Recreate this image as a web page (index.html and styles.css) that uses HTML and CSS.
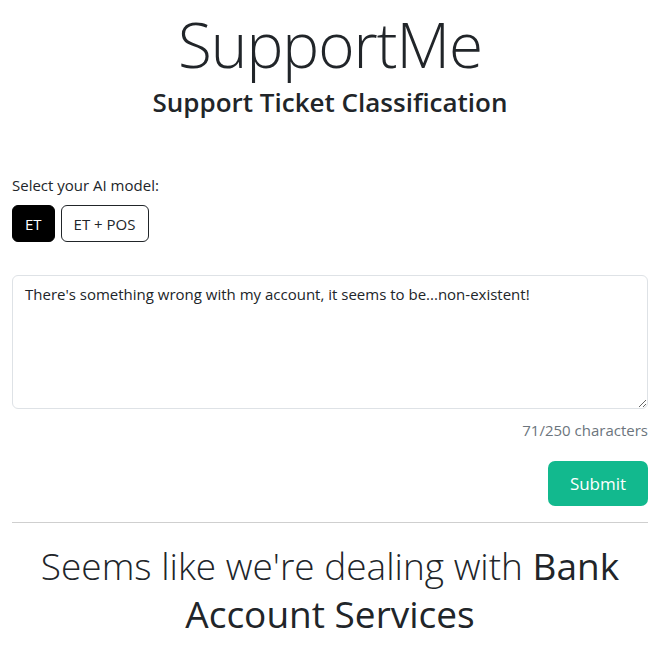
FILE: index.html
```html
<!DOCTYPE html>
<html lang="en">
<head>
<meta charset="utf-8">
<title>SupportMe</title>
<link rel="stylesheet" href="styles.css">
</head>
<body>
<main class="container">
  <header class="header">
    <h1 class="brand">SupportMe</h1>
    <h2 class="subtitle">Support Ticket Classification</h2>
  </header>
  <section class="model">
    <div class="model-label">Select your AI model:</div>
    <div class="model-buttons">
      <button class="btn-model active">ET</button>
      <button class="btn-model">ET + POS</button>
    </div>
  </section>
  <section class="ticket">
    <textarea class="ticket-input">There's something wrong with my account, it seems to be...non-existent!</textarea>
    <div class="counter">71/250 characters</div>
    <div class="actions"><button class="btn-submit">Submit</button></div>
  </section>
  <hr class="divider">
  <p class="result">Seems like we're dealing with <span class="result-cat">Bank Account Services</span></p>
</main>
</body>
</html>
```
FILE: styles.css
```css
* { box-sizing: border-box; }
html, body { margin: 0; padding: 0; background: #fff; }
body {
  font-family: "Open Sans", "Noto Sans", sans-serif;
  color: #212529;
  font-size: 15px;
}
.container { padding: 0 7px 0 12px; }
.header { text-align: center; padding-top: 4px; }
.brand {
  margin: 0;
  font-weight: 300;
  font-size: 62px;
  line-height: 80px;
  letter-spacing: -1px;
}
.subtitle {
  margin: 0;
  font-weight: 600;
  font-size: 26px;
  line-height: 36px;
}
.model { margin-top: 54px; }
.model-label { line-height: 22px; }
.model-buttons { display: flex; gap: 6px; margin-top: 9px; }
.btn-model {
  font-family: inherit;
  font-size: 15px;
  height: 37px;
  padding: 0 12px;
  border: 1px solid #212529;
  border-radius: 6px;
  background: #fff;
  color: #212529;
}
.btn-model.active { background: #000; color: #fff; border-color: #000; }
.ticket { margin-top: 33px; }
.ticket-input {
  display: block;
  width: 100%;
  height: 134px;
  padding: 7px 12px;
  font-family: inherit;
  font-size: 15px;
  line-height: 22px;
  color: #212529;
  border: 1px solid #dee2e6;
  border-radius: 6px;
  resize: vertical;
}
.counter { text-align: right; color: #6c757d; margin-top: 10px; line-height: 22px; }
.actions { display: flex; justify-content: flex-end; margin-top: 20px; }
.btn-submit {
  font-family: inherit;
  font-size: 17px;
  width: 100px;
  height: 45px;
  border: none;
  border-radius: 7px;
  background: #12b98e;
  color: #fff;
}
.divider { border: 0; border-top: 1px solid #cfcfcf; margin: 16px 0 0; }
.result {
  text-align: center;
  font-weight: 300;
  font-size: 37px;
  line-height: 48px;
  margin: 19px 0 0;
}
.result-cat { font-weight: 400; }
```
